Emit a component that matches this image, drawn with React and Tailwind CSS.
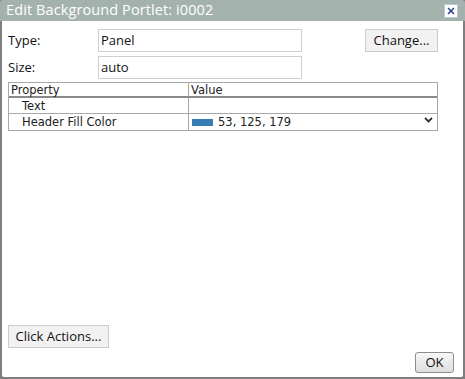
export default function App() {
  return (
    <div className="w-[465px] h-[379px] bg-[#7f7f7f] p-[2px] pt-0 flex flex-col font-['Open_Sans',sans-serif]">
      {/* Title bar */}
      <div className="h-[21px] bg-[#a3b2ad] flex items-center justify-between rounded-t-[3px] -mx-[2px] pl-[6px] pr-[7px]">
        <span className="text-white text-[14.5px] leading-none tracking-[0.1px]">Edit Background Portlet: i0002</span>
        <div className="w-[14px] h-[14px] bg-white border border-[#b7c8d6] flex items-center justify-center">
          <svg width="10" height="10" viewBox="0 0 10 10">
            <path d="M2 2 L8 8 M8 2 L2 8" stroke="#2b4185" strokeWidth="1.5" />
          </svg>
        </div>
      </div>

      {/* Body */}
      <div className="flex-1 bg-white rounded-b-[2px] flex flex-col px-[6px] pt-[8px] pb-[4px] text-[#111]">
        <div className="flex items-center h-[23px]">
          <span className="w-[90px] text-[13px]">Type:</span>
          <div className="w-[204px] h-[23px] border border-[#cfcfcf] flex items-center pl-[2px] text-[13px]">Panel</div>
          <div className="flex-1" />
          <button className="w-[73px] h-[23px] border border-[#cbcbcb] bg-[#f2f2f2] text-[13px] mr-[19px]">Change...</button>
        </div>
        <div className="flex items-center h-[23px] mt-[4px]">
          <span className="w-[90px] text-[13px]">Size:</span>
          <div className="w-[204px] h-[23px] border border-[#cfcfcf] flex items-center pl-[2px] text-[13px]">auto</div>
        </div>

        {/* Property table */}
        <div className="mt-[3px] w-[430px] border border-[#a8a8a8] font-['DejaVu_Sans',sans-serif] text-[11.5px] text-[#222]">
          <div className="flex h-[15px] border-b-2 border-[#8a8a8a]">
            <div className="w-[180px] border-r border-[#a8a8a8] pl-[2px] leading-[15px]">Property</div>
            <div className="flex-1 pl-[2px] leading-[15px]">Value</div>
          </div>
          <div className="flex h-[16px] border-b border-[#a8a8a8]">
            <div className="w-[180px] border-r border-[#a8a8a8] pl-[13px] leading-[16px]">Text</div>
            <div className="flex-1" />
          </div>
          <div className="flex h-[16px]">
            <div className="w-[180px] border-r border-[#a8a8a8] pl-[13px] leading-[16px]">Header Fill Color</div>
            <div className="flex-1 flex items-center pl-[3px]">
              <div className="w-[21px] h-[7px] bg-[rgb(53,125,179)] mr-[5px]" />
              <span className="leading-[16px]">53, 125, 179</span>
              <div className="flex-1" />
              <svg width="9" height="6" viewBox="0 0 9 6" className="mr-[4px] -mt-[4px]">
                <path d="M1 1 L4.5 4.5 L8 1" stroke="#333" strokeWidth="1.8" fill="none" />
              </svg>
            </div>
          </div>
        </div>

        <div className="flex-1" />
        <button className="self-start w-[101px] h-[23px] border border-[#cbcbcb] bg-[#f2f2f2] text-[13px]">Click Actions...</button>
        <div className="flex justify-end mt-[4px] mr-[3px]">
          <button className="w-[39px] h-[21px] border border-[#8d8d8d] rounded-[3px] bg-gradient-to-b from-[#f6f6f6] to-[#dedede] text-[13px] leading-none">OK</button>
        </div>
      </div>
    </div>
  );
}
